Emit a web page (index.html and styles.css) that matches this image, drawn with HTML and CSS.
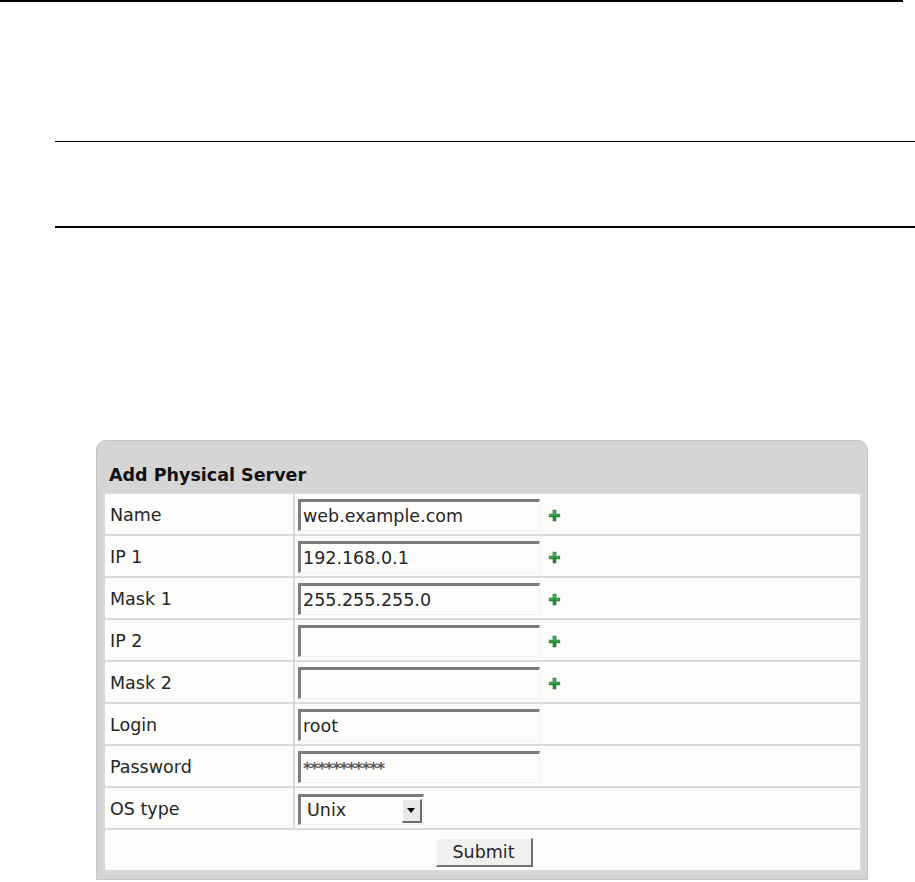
FILE: index.html
```html
<!DOCTYPE html>
<html lang="en">
<head>
  <meta charset="UTF-8">
  <title>Add Physical Server</title>
  <link rel="stylesheet" href="styles.css">
</head>
<body>

  <div class="top-rule"></div>
  <div class="banner"></div>

  <div class="panel">
    <div class="panel-title">Add Physical Server</div>
    <table class="form">
      <tr>
        <td class="label">Name</td>
        <td><input class="field" type="text" value="web.example.com"><span class="add"><svg width="13" height="13" viewBox="0 0 12 12"><path d="M4.3 0.8h3.4v3.5h3.5v3.4H7.7v3.5H4.3V7.7H0.8V4.3h3.5z" fill="#2a8438"/><path d="M5 1.5h2v3.5h3.5v1.2H7v-1H5v1H1.5V5H5z" fill="#46b058"/></svg></span></td>
      </tr>
      <tr>
        <td class="label">IP 1</td>
        <td><input class="field" type="text" value="192.168.0.1"><span class="add"><svg width="13" height="13" viewBox="0 0 12 12"><path d="M4.3 0.8h3.4v3.5h3.5v3.4H7.7v3.5H4.3V7.7H0.8V4.3h3.5z" fill="#2a8438"/><path d="M5 1.5h2v3.5h3.5v1.2H7v-1H5v1H1.5V5H5z" fill="#46b058"/></svg></span></td>
      </tr>
      <tr>
        <td class="label">Mask 1</td>
        <td><input class="field" type="text" value="255.255.255.0"><span class="add"><svg width="13" height="13" viewBox="0 0 12 12"><path d="M4.3 0.8h3.4v3.5h3.5v3.4H7.7v3.5H4.3V7.7H0.8V4.3h3.5z" fill="#2a8438"/><path d="M5 1.5h2v3.5h3.5v1.2H7v-1H5v1H1.5V5H5z" fill="#46b058"/></svg></span></td>
      </tr>
      <tr>
        <td class="label">IP 2</td>
        <td><input class="field" type="text" value=""><span class="add"><svg width="13" height="13" viewBox="0 0 12 12"><path d="M4.3 0.8h3.4v3.5h3.5v3.4H7.7v3.5H4.3V7.7H0.8V4.3h3.5z" fill="#2a8438"/><path d="M5 1.5h2v3.5h3.5v1.2H7v-1H5v1H1.5V5H5z" fill="#46b058"/></svg></span></td>
      </tr>
      <tr>
        <td class="label">Mask 2</td>
        <td><input class="field" type="text" value=""><span class="add"><svg width="13" height="13" viewBox="0 0 12 12"><path d="M4.3 0.8h3.4v3.5h3.5v3.4H7.7v3.5H4.3V7.7H0.8V4.3h3.5z" fill="#2a8438"/><path d="M5 1.5h2v3.5h3.5v1.2H7v-1H5v1H1.5V5H5z" fill="#46b058"/></svg></span></td>
      </tr>
      <tr>
        <td class="label">Login</td>
        <td><input class="field" type="text" value="root"></td>
      </tr>
      <tr>
        <td class="label">Password</td>
        <td><input class="field pass" type="text" value="***********"></td>
      </tr>
      <tr>
        <td class="label">OS type</td>
        <td>
          <span class="select">
            <select><option>Unix</option><option>Windows</option></select>
            <span class="arrow"></span>
          </span>
        </td>
      </tr>
      <tr>
        <td colspan="2" class="submit-row"><button type="button">Submit</button></td>
      </tr>
    </table>
  </div>

</body>
</html>
```

FILE: styles.css
```css
body, html { margin: 0; padding: 0; background: #fff; font-family: "DejaVu Sans", Verdana, sans-serif; color: #262626; }
.top-rule { width: 903px; height: 2px; background: #000; }
.banner { margin: 139px 0 0 55px; height: 84px; border-top: 1px solid #000; border-bottom: 2px solid #000; }

.panel { width: 759px; margin: 212px 0 0 96px; padding: 0 5px 7px 6px; background: #d5d5d5; border: 1px solid #c4c4c4; border-radius: 10px 10px 0 0; }
.panel-title { font-size: 17.5px; font-weight: bold; padding: 22px 0 5px 6px; line-height: 24px; color: #111; }

.form { width: 100%; border-collapse: collapse; border: 2px solid #b9b9b9; background: #fcfcfa; font-size: 17.5px; }
.form td { border: 2px solid #dadada; height: 38px; padding: 2px 0 0 3px; vertical-align: middle; }
.form td.label { width: 183px; padding-left: 5px; }

.field { box-sizing: border-box; width: 242px; height: 32px; margin: 0; padding: 0 0 0 2px; vertical-align: middle; font: 17.5px "DejaVu Sans", Verdana, sans-serif; color: #262626; background: #fdfdfb; border-style: solid; border-width: 3px 1px 1px 3px; border-color: #7c7c7c #f1f1f1 #f1f1f1 #7c7c7c; outline: none; }
.field.pass { font-size: 16px; font-weight: bold; letter-spacing: -1px; color: #555; }
.add { display: inline-block; margin-left: 8px; vertical-align: middle; line-height: 0; }

.select { display: inline-flex; vertical-align: middle; height: 31px; box-sizing: border-box; border-style: solid; border-width: 3px 1px 1px 3px; border-color: #7c7c7c #f1f1f1 #f1f1f1 #7c7c7c; background: #fdfdfb; }
.select select { appearance: none; -webkit-appearance: none; border: none; background: transparent; width: 101px; padding: 0 0 0 6px; font: 17.5px "DejaVu Sans", Verdana, sans-serif; color: #262626; outline: none; }
.arrow { position: relative; width: 17px; margin: 2px 1px 1px 0; background: #e9e9e7; border-style: solid; border-width: 1px 2px 2px 1px; border-color: #fff #6c6c6c #6c6c6c #fff; }
.arrow::after { content: ""; position: absolute; left: 4px; top: 8px; border-style: solid; border-width: 5px 4.5px 0; border-color: #000 transparent transparent; }

.submit-row { text-align: center; }
.submit-row button { width: 97px; height: 29px; margin-top: 2px; font: 17.5px "DejaVu Sans", Verdana, sans-serif; color: #262626; background: #f1f1ef; border-style: solid; border-width: 1px 2px 2px 1px; border-color: #fff #6f6f6f #6f6f6f #fff; padding: 0; }
```
